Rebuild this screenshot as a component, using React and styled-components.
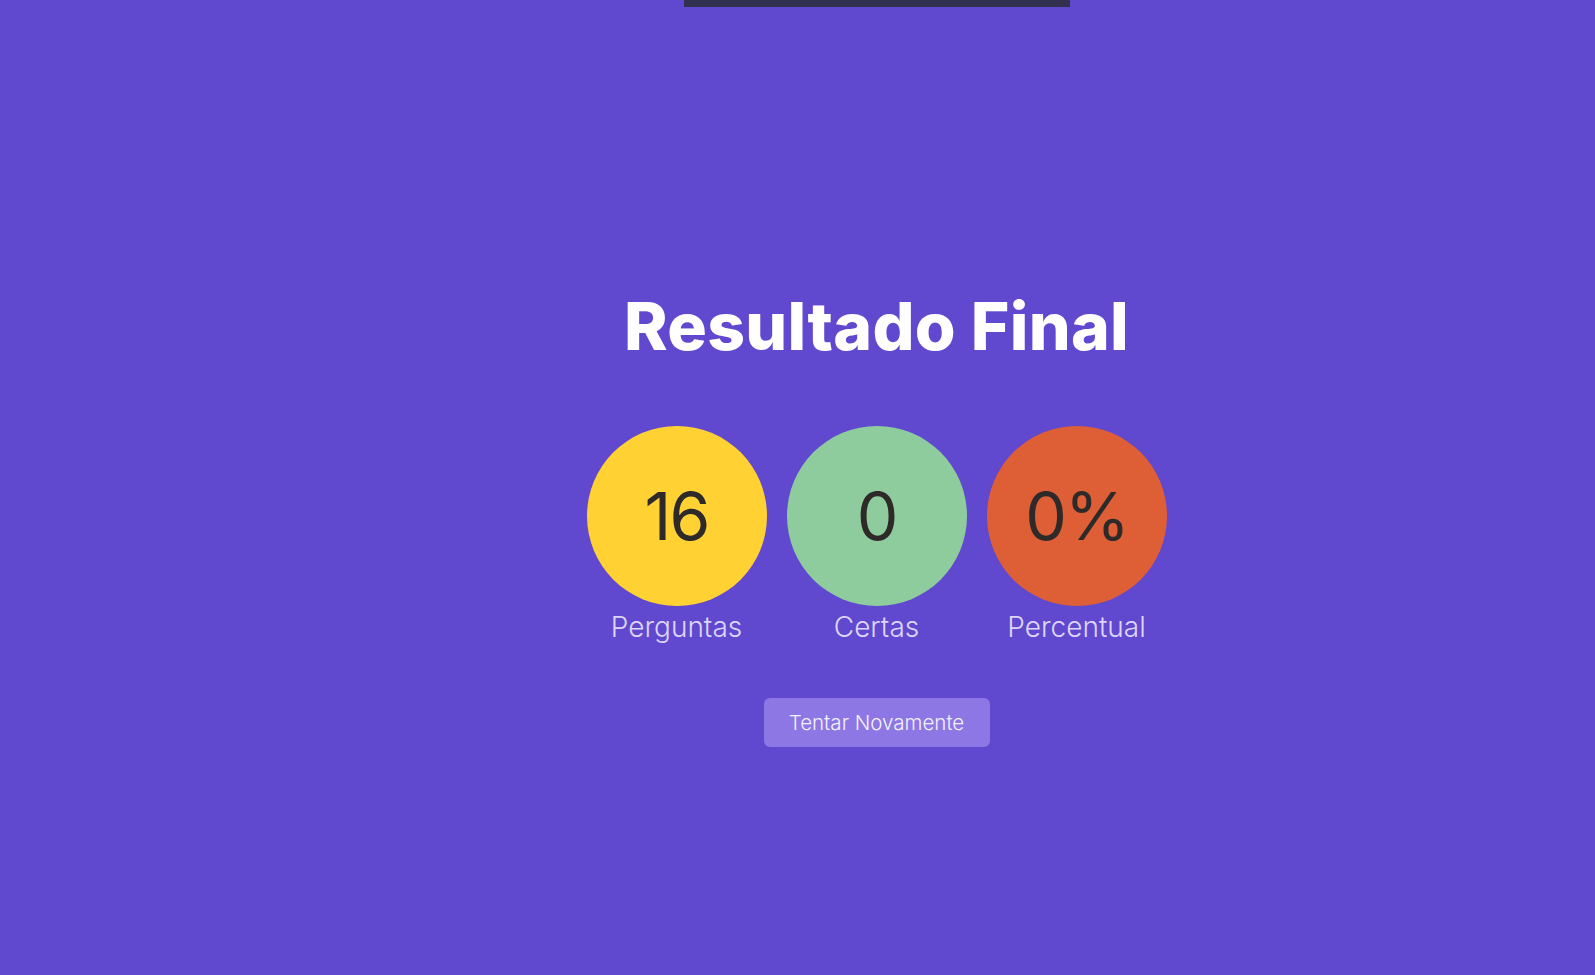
import styled, { createGlobalStyle } from "styled-components";

const GlobalStyle = createGlobalStyle`
body {
  margin: 0;
  background: #6149cf;
  font-family: Inter, "Liberation Sans", sans-serif;
}
`

const Page = styled.div`
display: flex;
flex-direction: column;
align-items: center;
min-height: 100vh;
padding-left: 158px;
box-sizing: border-box;
`
const TopBar = styled.div`
width: 386px;
height: 7px;
background: #31304f;
`
const Result = styled.section`
display: flex;
flex-direction: column;
align-items: center;
margin-top: 279px;
`
const Title = styled.h1`
margin: 0;
font-size: 66px;
line-height: 80px;
font-weight: 800;
color: #ffffff;
letter-spacing: 0.3px;
`
const Stats = styled.div`
display: flex;
gap: 20px;
margin-top: 60px;
`
const Stat = styled.div`
display: flex;
flex-direction: column;
align-items: center;
`
const Circle = styled.div`
width: 180px;
height: 180px;
border-radius: 50%;
background: ${p => p.color};
display: flex;
align-items: center;
justify-content: center;
font-size: 66px;
font-weight: 400;
letter-spacing: -2px;
color: #2f2a2a;
`
const Label = styled.div`
margin-top: 1px;
font-size: 28px;
line-height: 40px;
font-weight: 300;
color: #ddd6f7;
`
const Button = styled.button`
margin-top: 51px;
width: 226px;
height: 49px;
border: none;
border-radius: 6px;
background: #8d77e5;
color: #f4f1ff;
font-family: Inter, "Liberation Sans", sans-serif;
font-size: 20.5px;
font-weight: 300;
cursor: pointer;
`

const stats = [
  { value: "16", label: "Perguntas", color: "#ffd133" },
  { value: "0", label: "Certas", color: "#8ecc9e" },
  { value: "0%", label: "Percentual", color: "#de5e36" },
];

export default function App() {
  return (
    <Page>
      <GlobalStyle />
      <TopBar />
      <Result>
        <Title>Resultado Final</Title>
        <Stats>
          {stats.map(s => (
            <Stat key={s.label}>
              <Circle color={s.color}>{s.value}</Circle>
              <Label>{s.label}</Label>
            </Stat>
          ))}
        </Stats>
        <Button>Tentar Novamente</Button>
      </Result>
    </Page>
  )
}
